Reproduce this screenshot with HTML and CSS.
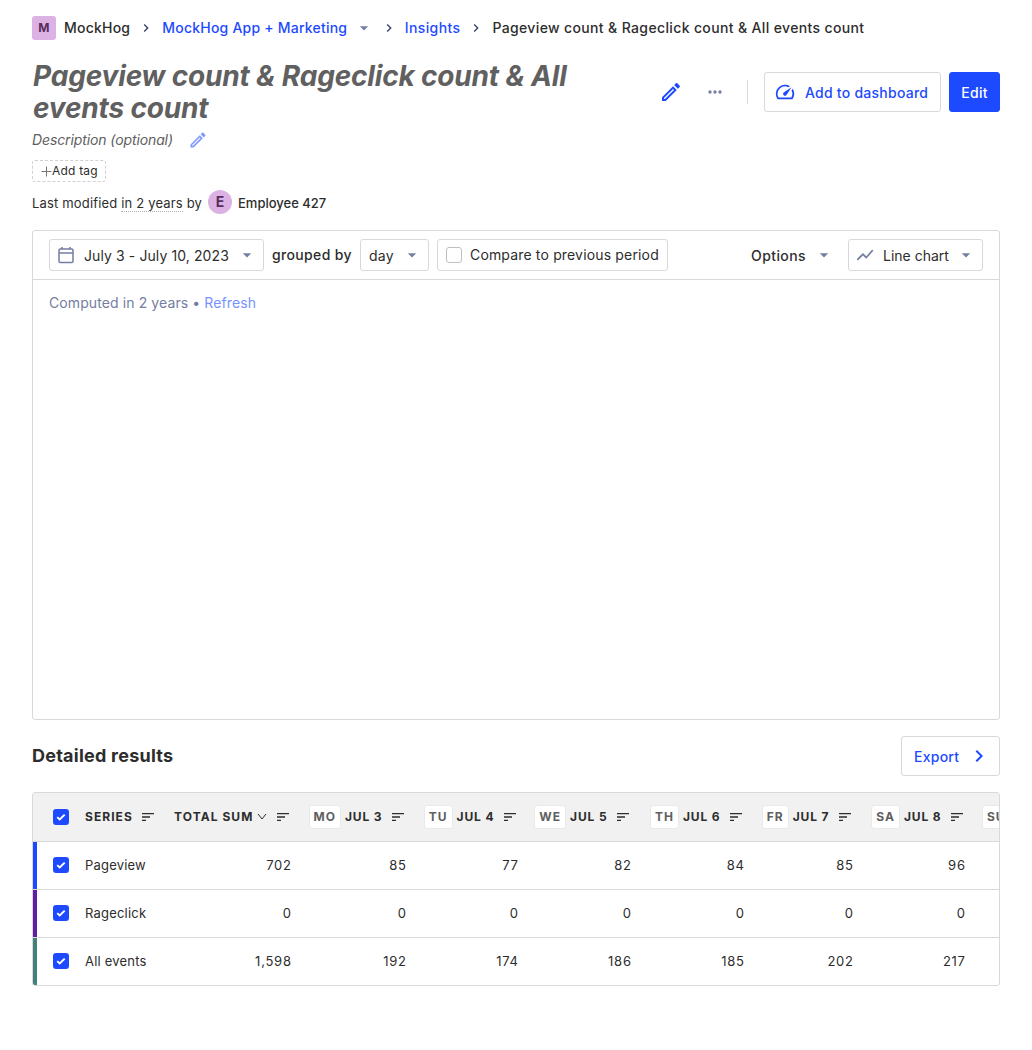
FILE: index.html
```html
<!DOCTYPE html>
<html lang="en">
<head>
<meta charset="utf-8">
<title>Pageview count &amp; Rageclick count &amp; All events count</title>
<link rel="stylesheet" href="styles.css">
</head>
<body>
<svg class="sprite" width="0" height="0">
  <symbol id="pencil" viewBox="0 0 24 24"><path d="M14.06 9l.94.94L5.92 19H5v-.92L14.06 9m3.6-6c-.25 0-.51.1-.7.29l-1.83 1.83 3.75 3.75 1.83-1.83c.39-.39.39-1.04 0-1.41l-2.34-2.34c-.2-.2-.45-.29-.71-.29m-3.6 3.19L3 17.25V21h3.75L17.81 9.94z"/></symbol>
  <symbol id="chevron" viewBox="0 0 24 24"><path d="M10 6L8.59 7.41 13.17 12l-4.58 4.59L10 18l6-6z"/></symbol>
  <symbol id="caret" viewBox="0 0 24 24"><path d="M7 10l5 5 5-5z"/></symbol>
  <symbol id="sort" viewBox="0 0 24 24"><path d="M3 18h6v-2H3zM3 6v2h18V6zm0 7h12v-2H3z"/></symbol>
  <symbol id="check" viewBox="0 0 16 16"><rect width="16" height="16" rx="3" fill="#1d4aff"/><path d="M4.2 8.1l2.5 2.4 5-4.9" fill="none" stroke="#fff" stroke-width="1.9"/></symbol>
</svg>
<main class="page">
  <nav class="crumbs">
    <span class="badge">M</span><span class="org">MockHog</span>
    <svg class="i16 sep"><use href="#chevron"/></svg>
    <a>MockHog App + Marketing</a><svg class="drop"><use href="#caret"/></svg>
    <svg class="i16 sep"><use href="#chevron"/></svg>
    <a class="link">Insights</a>
    <svg class="i16 sep"><use href="#chevron"/></svg>
    <span class="current">Pageview count &amp; Rageclick count &amp; All events count</span>
  </nav>
  <header class="head">
    <h1>Pageview count &amp; Rageclick count &amp; All events count</h1>
    <div class="actions">
      <svg class="i24 blue"><use href="#pencil"/></svg>
      <svg class="i20 more" viewBox="0 0 24 24"><path d="M6 10a2 2 0 1 0 0 4 2 2 0 0 0 0-4zm12 0a2 2 0 1 0 0 4 2 2 0 0 0 0-4zm-6 0a2 2 0 1 0 0 4 2 2 0 0 0 0-4z"/></svg>
      <span class="rule"></span>
      <button class="btn add"><svg class="gauge" viewBox="0 0 24 24"><path d="M20.38 8.57l-1.23 1.85a8 8 0 0 1-.22 7.58H5.07A8 8 0 0 1 15.58 6.85l1.85-1.23A10 10 0 0 0 3.35 19a2 2 0 0 0 1.72 1h13.85a2 2 0 0 0 1.74-1 10 10 0 0 0-.27-10.44zm-9.79 6.84a2 2 0 0 0 2.83 0l5.66-8.49-8.49 5.66a2 2 0 0 0 0 2.83z"/></svg><span>Add to dashboard</span></button>
      <button class="btn edit"><span>Edit</span></button>
    </div>
  </header>
  <div class="desc"><span>Description (optional)</span><svg class="i20"><use href="#pencil"/></svg></div>
  <div class="tag"><svg width="11" height="11" viewBox="0 0 11 11"><path d="M5.5.5v10M.5 5.5h10" stroke="#777" fill="none"/></svg>Add tag</div>
  <div class="modified"><span class="when">Last modified <u>in 2 years</u> by</span><b class="avatar">E</b><strong>Employee 427</strong></div>

  <section class="card">
    <div class="bar">
      <div class="field date"><svg class="cal" viewBox="0 0 16 18"><path d="M1 4.2q0-1.2 1.2-1.2h11.6q1.2 0 1.2 1.2v11.1q0 1.2-1.2 1.2H2.2Q1 16.5 1 15.3zM1 7h14M4 3V1M12 3V1"/></svg><span>July 3 - July 10, 2023</span><svg class="i20 drop"><use href="#caret"/></svg></div>
      <span class="grouped">grouped by</span>
      <div class="field day"><span>day</span><svg class="i20 drop"><use href="#caret"/></svg></div>
      <label class="field compare"><i class="box"></i>Compare to previous period</label>
      <div class="options"><span>Options</span><svg class="i20 drop"><use href="#caret"/></svg></div>
      <div class="field chart"><svg class="i20 line" viewBox="0 0 24 24"><path d="M3.5 18.49l6-6.01 4 4L22 6.92l-1.41-1.41-7.09 7.97-4-4L2 16.99z"/></svg><span>Line chart</span><svg class="i20 drop"><use href="#caret"/></svg></div>
    </div>
    <div class="computed">Computed in 2 years • <a>Refresh</a></div>
  </section>

  <div class="results"><h2>Detailed results</h2><button class="btn export"><span>Export</span><svg class="i24"><use href="#chevron"/></svg></button></div>

  <div class="table">
    <div class="row th">
      <div class="chk"><svg><use href="#check"/></svg></div>
      <div class="l wide">Series<svg class="i16"><use href="#sort"/></svg></div>
      <div class="wide">Total sum<svg class="down" viewBox="0 0 10 8"><path d="M1 1l4 5 4-5"/></svg><svg class="i16"><use href="#sort"/></svg></div>
      <div><em>Mo</em>Jul 3<svg class="i16"><use href="#sort"/></svg></div>
      <div><em>Tu</em>Jul 4<svg class="i16"><use href="#sort"/></svg></div>
      <div><em>We</em>Jul 5<svg class="i16"><use href="#sort"/></svg></div>
      <div><em>Th</em>Jul 6<svg class="i16"><use href="#sort"/></svg></div>
      <div><em>Fr</em>Jul 7<svg class="i16"><use href="#sort"/></svg></div>
      <div><em>Sa</em>Jul 8<svg class="i16"><use href="#sort"/></svg></div>
      <div class="l next"><em>Su</em></div>
    </div>
    <div class="row s1"><div class="chk"><svg><use href="#check"/></svg></div><div class="l">Pageview</div><div>702</div><div>85</div><div>77</div><div>82</div><div>84</div><div>85</div><div>96</div></div>
    <div class="row s2"><div class="chk"><svg><use href="#check"/></svg></div><div class="l">Rageclick</div><div>0</div><div>0</div><div>0</div><div>0</div><div>0</div><div>0</div><div>0</div></div>
    <div class="row s3"><div class="chk"><svg><use href="#check"/></svg></div><div class="l">All events</div><div>1,598</div><div>192</div><div>174</div><div>186</div><div>185</div><div>202</div><div>217</div></div>
  </div>
</main>
</body>
</html>
```
FILE: styles.css
```css
* { box-sizing: border-box; }
body { margin: 0; background: #fff; color: #2d2d2d; font: 400 14px/20px Inter, sans-serif; }
svg { display: block; flex: none; fill: currentColor; }
a { color: #1d4aff; }
.sprite { position: absolute; }
.i16 { width: 16px; height: 16px; }
.i20 { width: 20px; height: 20px; }
.i24 { width: 24px; height: 24px; }
.blue { color: #1d4aff; }
.drop { color: #747ea1; }
.page { padding: 16px 32px 0; }

.crumbs { display: flex; align-items: center; height: 24px; font-weight: 500; letter-spacing: 0.22px; white-space: nowrap; }
.crumbs .link { letter-spacing: 0.38px; }
.crumbs .current { letter-spacing: 0.36px; }
.badge { width: 24px; height: 24px; border-radius: 3px; background: #dcb1e3; color: #572e5e; font: 700 12px/24px Inter, sans-serif; text-align: center; }
.org { margin-left: 8px; }
.sep { margin: 0 8px; color: #35416b; }
.crumbs .drop { width: 20px; height: 20px; margin: 0 -1px 0 6.5px; }

.head { display: flex; align-items: center; justify-content: space-between; margin-top: 20px; height: 64px; }
h1 { margin: 0 0 0 1px; width: 560px; font: italic 700 28px/32px Inter, sans-serif; letter-spacing: -0.17px; color: #606060; }
.actions { display: flex; align-items: center; }
.more { margin: 0 22px; color: #747ea1; }
.rule { width: 1px; height: 24px; background: #d9d9d9; margin-right: 16px; }
.btn { display: flex; align-items: center; height: 40px; border: 1px solid #d9d9d9; border-radius: 3px; background: #fff; color: #1d4aff; padding: 0; font: 500 14px/20px Inter, sans-serif; letter-spacing: 0.25px; white-space: nowrap; }
.btn span { padding-top: 2px; }
.add { width: 177px; padding-left: 9px; }
.gauge { width: 22px; height: 22px; margin-right: 9px; }
.edit { width: 51px; margin-left: 8px; justify-content: center; background: #1d4aff; border-color: #1d4aff; color: #fff; }

.desc { display: flex; align-items: center; height: 20px; margin-top: 6px; font-style: italic; letter-spacing: -0.11px; color: #606060; }
.desc svg { margin-left: 15px; color: #8299ff; }
.tag { display: flex; align-items: center; width: 74px; height: 22px; margin-top: 10px; padding-left: 8px; border: 1px dashed #d0d0d0; border-radius: 3px; font-size: 12px; letter-spacing: 0.2px; }
.modified { display: flex; align-items: center; height: 24px; margin-top: 8px; font-size: 13px; }
.when { padding-top: 1px; letter-spacing: 0.17px; }
.modified u { text-decoration: none; border-bottom: 1px dotted #b0b0b0; }
.modified strong { padding-top: 1px; font-weight: 500; }
.avatar { width: 24px; height: 24px; margin: 0 6px; border-radius: 50%; background: #dcb1e3; color: #572e5e; font: 700 14px/24px Inter, sans-serif; text-align: center; }

.card { height: 490px; margin-top: 16px; border: 1px solid #d9d9d9; border-radius: 3px; }
.bar { display: flex; align-items: center; height: 49px; padding: 0 16px; border-bottom: 1px solid #d9d9d9; white-space: nowrap; }
.field { display: flex; align-items: center; height: 32px; padding: 0 8px; border: 1px solid #d9d9d9; border-radius: 3px; }
.field span, .options span { padding-top: 2px; }
.date { width: 215px; letter-spacing: 0.1px; }
.cal { width: 16px; height: 18px; margin-right: 10px; fill: none; stroke: #747ea1; stroke-width: 1.5; }
.field .drop { margin-left: auto; margin-right: -2px; }
.grouped { width: 96px; padding-left: 8px; font-weight: 500; letter-spacing: 0.35px; }
.day { width: 69px; letter-spacing: 0.2px; }
.compare { width: 231px; margin-left: 8px; letter-spacing: 0.16px; }
.box { flex: none; width: 16px; height: 16px; margin-right: 8px; border: 1px solid #bfbfbf; border-radius: 3px; }
.options { display: flex; align-items: center; margin-left: auto; font-weight: 500; letter-spacing: 0.4px; }
.options .drop { margin: 0 14px 0 8px; }
.chart { width: 135px; }
.line { margin: 0 8px 0 -2px; color: #747ea1; }
.computed { padding: 13px 16px; letter-spacing: 0.1px; color: #747ea1; }
.computed a { color: #7792ff; }

.results { display: flex; align-items: center; justify-content: space-between; margin-top: 16px; }
h2 { margin: 0; font: 700 18px/24px Inter, sans-serif; letter-spacing: 0.24px; }
.export { width: 99px; padding: 0 8px 0 12px; justify-content: space-between; }

.table { margin-top: 16px; border: 1px solid #d9d9d9; border-radius: 3px; overflow: hidden; font-size: 13px; }
.row { display: grid; grid-template-columns: 44px 88px 134px 115px 112px 113px 113px 109px 112px 112px; height: 48px; border-bottom: 1px solid #d9d9d9; box-shadow: inset 4px 0 var(--stripe, transparent); }
.row:last-child { height: 47px; border-bottom: 0; }
.row > div { display: flex; align-items: center; justify-content: flex-end; padding: 0 7.3px 1px 8px; letter-spacing: 0.75px; white-space: nowrap; }
.row > .l { justify-content: flex-start; letter-spacing: 0.2px; }
.row > .chk { padding: 0 8px 1px 20px; justify-content: flex-start; }
.chk svg { width: 16px; height: 16px; }
.s1 { --stripe: #1d4aff; }
.s2 { --stripe: #621da6; }
.s3 { --stripe: #42827e; }
.row.th { height: 49px; background: #f1f1f1; font-size: 12px; font-weight: 700; text-transform: uppercase; }
.row.th > div { padding: 0 8px; letter-spacing: 0.85px; }
.row.th > .chk { padding-left: 20px; }
.row.th > .wide { letter-spacing: 1.05px; }
.row.th > .next { padding-left: 9px; }
.row.th .i16 { margin-left: 7.6px; }
.row.th > .l .i16 { margin-left: 7px; }
.down { width: 10px; height: 8px; margin: 0 0 0 4px; fill: none; stroke: #2d2d2d; }
em { height: 24px; margin-right: 4px; padding: 0 4px; border: 1px solid #e9e9e9; border-radius: 3px; background: #fff; color: #606060; font-style: normal; line-height: 22px; letter-spacing: 1px; }
```
